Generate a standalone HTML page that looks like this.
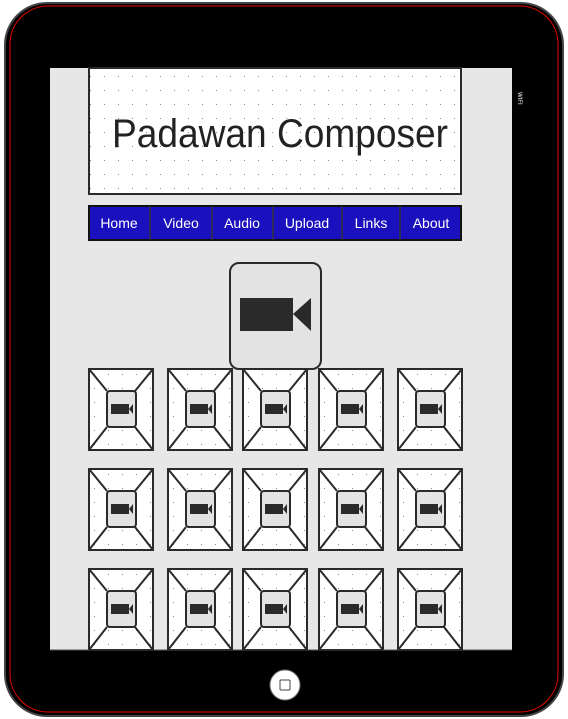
<!DOCTYPE html>
<html><head><meta charset="utf-8"><style>
html,body{margin:0;padding:0;background:#fff;}
body{width:568px;height:719px;overflow:hidden;position:relative;font-family:"Liberation Sans",sans-serif;}
svg{position:absolute;left:0;top:0;}
</style></head><body>
<svg width="568" height="719" viewBox="0 0 568 719" xmlns="http://www.w3.org/2000/svg">
<defs>
<pattern id="dots" width="14" height="14" patternUnits="userSpaceOnUse"><rect x="6" y="6" width="1" height="1" fill="#888"/></pattern>
<g id="tile">
<rect x="1" y="1" width="64" height="81" fill="#fff" stroke="#2a2a2a" stroke-width="2"/>
<rect x="1" y="1" width="64" height="81" fill="url(#dots)"/>
<path d="M1 1 L19 23 M65 1 L47 23 M1 82 L19 59 M65 82 L47 59" stroke="#2a2a2a" stroke-width="2" fill="none"/>
<rect x="19" y="23" width="29" height="36" rx="3" fill="#e3e3e3" stroke="#2a2a2a" stroke-width="2"/>
<rect x="23" y="36" width="18" height="10" fill="#2a2a2a"/>
<path d="M41 41 L45 36 L45 46 Z" fill="#2a2a2a"/>
</g>
</defs>
<rect x="5" y="3" width="558" height="713" rx="42" fill="#000" stroke="#444" stroke-width="2"/>
<rect x="10" y="6" width="548" height="706" rx="38" fill="none" stroke="#e00" stroke-width="1"/>
<rect x="50" y="68" width="462" height="582" fill="#e8e7e8"/>
<line x1="50" y1="650" x2="512" y2="650" stroke="#555" stroke-width="1"/>
<rect x="89" y="68" width="372" height="126" fill="#fff" stroke="#2a2a2a" stroke-width="2"/>
<rect x="89" y="68" width="372" height="126" fill="url(#dots)"/>
<text x="112" y="147" textLength="336" lengthAdjust="spacingAndGlyphs" font-family="Liberation Sans, sans-serif" font-size="40" fill="#222">Padawan Composer</text>
<rect x="89" y="206" width="372" height="34" fill="#1a10bd" stroke="#111" stroke-width="2"/>
<g stroke="#333" stroke-width="1.5"><line x1="150" y1="206" x2="150" y2="240"/><line x1="212" y1="206" x2="212" y2="240"/><line x1="273" y1="206" x2="273" y2="240"/><line x1="342" y1="206" x2="342" y2="240"/><line x1="400" y1="206" x2="400" y2="240"/></g>
<g fill="#fff" font-size="14" text-anchor="middle" font-family="Liberation Sans, sans-serif">
<text x="119" y="228">Home</text><text x="181" y="228">Video</text><text x="242" y="228">Audio</text><text x="307" y="228">Upload</text><text x="371" y="228">Links</text><text x="431" y="228">About</text></g>
<text x="518" y="92" fill="#fff" font-size="6" transform="rotate(90 518 92)">WIFI</text>
<rect x="230" y="263" width="91" height="106" rx="9" fill="#e3e3e3" stroke="#2a2a2a" stroke-width="2"/>
<rect x="240" y="298" width="53" height="33" fill="#2a2a2a"/>
<path d="M293 314 L311 298 L311 331 Z" fill="#2a2a2a"/>
<use href="#tile" x="88" y="368"/><use href="#tile" x="167" y="368"/><use href="#tile" x="242" y="368"/><use href="#tile" x="318" y="368"/><use href="#tile" x="397" y="368"/>
<use href="#tile" x="88" y="468"/><use href="#tile" x="167" y="468"/><use href="#tile" x="242" y="468"/><use href="#tile" x="318" y="468"/><use href="#tile" x="397" y="468"/>
<use href="#tile" x="88" y="568"/><use href="#tile" x="167" y="568"/><use href="#tile" x="242" y="568"/><use href="#tile" x="318" y="568"/><use href="#tile" x="397" y="568"/>
<circle cx="285" cy="685" r="15" fill="#fff" stroke="#777" stroke-width="1"/>
<rect x="280" y="680" width="10" height="10" rx="1" fill="#fff" stroke="#444" stroke-width="1"/>
</svg>
</body></html>
